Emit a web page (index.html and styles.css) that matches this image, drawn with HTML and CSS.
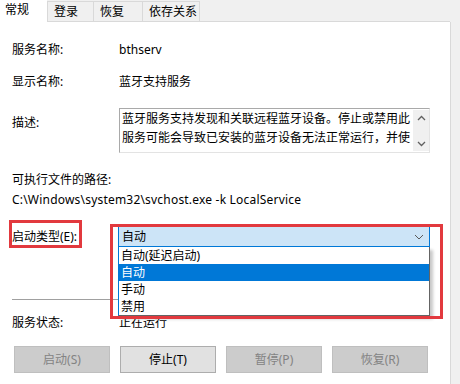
FILE: index.html
```html
<!DOCTYPE html>
<html lang="zh-CN">
<head>
<meta charset="utf-8">
<title>蓝牙支持服务 属性</title>
<link rel="stylesheet" href="styles.css">
</head>
<body>
<div class="dialog">
  <div class="tabs">
    <div class="tab active">常规</div>
    <div class="tab">登录</div>
    <div class="tab">恢复</div>
    <div class="tab wide">依存关系</div>
  </div>
  <div class="panel">
    <div class="row r1"><span class="label">服务名称:</span><span class="value">bthserv</span></div>
    <div class="row r2"><span class="label">显示名称:</span><span class="value">蓝牙支持服务</span></div>
    <div class="row desc">
      <span class="label desc-label">描述:</span>
      <div class="textbox">
        <div class="tb-text">蓝牙服务支持发现和关联远程蓝牙设备。停止或禁用此<br>服务可能会导致已安装的蓝牙设备无法正常运行，并使</div>
        <div class="scroll">
          <svg class="arrow" width="9" height="6" viewBox="0 0 9 6"><path d="M1 5 L4.5 1.5 L8 5" fill="none" stroke="#606060" stroke-width="1.3"/></svg>
          <svg class="arrow" width="9" height="6" viewBox="0 0 9 6"><path d="M1 1 L4.5 4.5 L8 1" fill="none" stroke="#606060" stroke-width="1.3"/></svg>
        </div>
      </div>
    </div>
    <div class="path-label">可执行文件的路径:</div>
    <div class="path">C:\Windows\system32\svchost.exe -k LocalService</div>
    <div class="row startup">
      <span class="label">启动类型(E):</span>
      <div class="combo">
        <div class="select"><span>自动</span>
          <svg class="chev" width="10" height="6" viewBox="0 0 10 6"><path d="M1 1 L5 5 L9 1" fill="none" stroke="#5a5a5a" stroke-width="1"/></svg>
        </div>
        <ul class="list">
          <li>自动(延迟启动)</li>
          <li class="sel">自动</li>
          <li>手动</li>
          <li>禁用</li>
        </ul>
      </div>
    </div>
    <div class="sep"></div>
    <div class="row status"><span class="label">服务状态:</span><span class="value">正在运行</span></div>
    <div class="buttons">
      <div class="btn disabled">启动(S)</div>
      <div class="btn">停止(T)</div>
      <div class="btn disabled">暂停(P)</div>
      <div class="btn disabled">恢复(R)</div>
    </div>
    <div class="mark mark-label"></div>
    <div class="mark mark-combo"></div>
  </div>
</div>
</body>
</html>
```

FILE: styles.css
```css
html, body {
  margin: 0;
  padding: 0;
}
body {
  width: 460px;
  height: 384px;
  overflow: hidden;
  background: #f0f0f0;
  font-family: "Noto Sans", "Noto Sans CJK SC", sans-serif;
  font-size: 12px;
  color: #000;
}
.dialog {
  width: 460px;
  height: 384px;
}
.tabs {
  display: flex;
  align-items: flex-end;
  border-bottom: 1px solid #d9d9d9;
  width: 450px;
  box-sizing: border-box;
  height: 22px;
}
.tab {
  box-sizing: border-box;
  height: 20px;
  width: 47px;
  padding-left: 6px;
  line-height: 19px;
  background: #f0f0f0;
  border: 1px solid #d9d9d9;
  border-bottom: none;
  margin-left: -1px;
}
.tab.active {
  height: 22px;
  margin-bottom: -1px;
  background: #fff;
  border: none;
  margin-left: 0;
  padding-left: 5px;
  line-height: 20px;
  position: relative;
}
.tab.active + .tab {
  margin-left: 0;
}
.tab.wide {
  width: 58px;
}
.tab:nth-child(3) {
  width: 50px;
}
.panel {
  position: relative;
  box-sizing: border-box;
  width: 451px;
  height: 362px;
  background: #fff;
  border-right: 1px solid #d9d9d9;
  padding-left: 12px;
  padding-top: 18px;
}
.row {
  display: grid;
  grid-template-columns: 107px 1fr;
  line-height: 20px;
}
.r2 { margin-top: 12px; }
.desc {
  margin-top: 16px;
  align-items: start;
}
.desc-label {
  padding-top: 5px;
}
.textbox {
  position: relative;
  box-sizing: border-box;
  width: 311px;
  height: 45px;
  border: 1px solid #a9a9a9;
  border-right-color: #e3e3e3;
  border-bottom-color: #e3e3e3;
  display: flex;
}
.tb-text {
  width: 292px;
  padding-left: 2px;
  line-height: 19px;
  white-space: nowrap;
  overflow: hidden;
}
.scroll {
  width: 16px;
  margin-left: auto;
  margin-top: 1px;
  height: 41px;
  background: #f0f0f0;
  display: flex;
  flex-direction: column;
  justify-content: space-between;
  align-items: center;
  padding: 5px 0 4px;
  box-sizing: border-box;
}
.arrow {
  display: block;
}
.path-label {
  margin-top: 17px;
  line-height: 20px;
}
.path {
  line-height: 20px;
  letter-spacing: 0.2px;
}
.startup {
  margin-top: 16px;
  line-height: 21px;
}
.combo {
  position: relative;
  margin-left: -1px;
  width: 312px;
}
.select {
  box-sizing: border-box;
  height: 21px;
  background: #cce4f7;
  border: 1px solid #0078d7;
  padding-left: 3px;
  padding-right: 5px;
  display: flex;
  align-items: center;
  justify-content: space-between;
  line-height: 19px;
}
.list {
  position: absolute;
  left: 0;
  top: 21px;
  width: 312px;
  margin: 0;
  padding: 0;
  list-style: none;
  box-sizing: border-box;
  border: 1px solid #646464;
  border-left-color: #0078d7;
  border-top: none;
  background: #fff;
  box-shadow: 3px 3px 3px rgba(0, 0, 0, 0.22);
  z-index: 2;
}
.list li {
  height: 17px;
  line-height: 17px;
  padding-left: 2px;
}
.list li.sel {
  background: #0078d7;
  color: #fff;
}
.sep {
  margin-top: 52px;
  height: 1px;
  width: 418px;
  background: #a0a0a0;
}
.status {
  margin-top: 16px;
  line-height: 14px;
}
.buttons {
  display: flex;
  gap: 10px;
  margin-top: 16px;
  margin-left: 2px;
}
.btn {
  box-sizing: border-box;
  width: 96px;
  height: 27px;
  line-height: 25px;
  text-align: center;
  background: #e1e1e1;
  border: 1px solid #adadad;
}
.btn.disabled {
  background: #cccccc;
  border-color: #bfbfbf;
  color: #838383;
}
.mark {
  position: absolute;
  box-sizing: border-box;
  border: 3px solid #e2393e;
  z-index: 3;
}
.mark-label {
  left: 9px;
  top: 198px;
  width: 73px;
  height: 28px;
}
.mark-combo {
  left: 110px;
  top: 202px;
  width: 333px;
  height: 95px;
}
```
